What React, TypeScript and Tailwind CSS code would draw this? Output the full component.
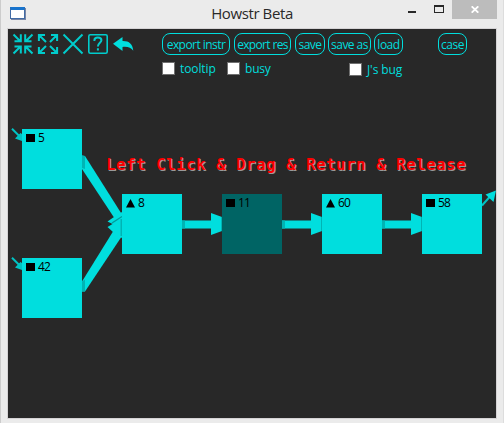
import React from 'react';

const pill =
  'flex h-[22px] shrink-0 items-center justify-center whitespace-nowrap rounded-[8px] border border-[#00dede] pt-[1px] text-[12px] leading-none';

function CheckItem({ label, className }: { label: string; className: string }) {
  return (
    <label className={`flex items-center whitespace-nowrap text-[12px] leading-[13px] ${className}`}>
      <span className="mr-[5px] h-[13px] w-[13px] shrink-0 border border-[#707070] bg-white" />
      <span>{label}</span>
    </label>
  );
}

function ToolIcons() {
  return (
    <svg className="shrink-0" width="122" height="22" viewBox="12 33 122 22" fill="none" stroke="#00cccc" strokeWidth="2">
      <path d="M13.5 34.5l7 7M14.5 41.2h6.3v-7M32.5 34.5l-7 7M31.5 41.2h-6.3v-7M13.5 53.5l7-7M14.5 46.4h6.3v7M32.5 53.5l-7-7M31.5 46.4h-6.3v7" />
      <path d="M39 35l7 7M38.9 41v-6.1H45M57 35l-7 7M51 34.9h6.1V41M39 53l7-7M38.9 47v6.1H45M57 53l-7-7M51 53.1h6.1V47" />
      <path d="M63.5 34.5l19 19M82.5 34.5l-19 19" />
      <rect x="88.8" y="34.8" width="18.4" height="18.4" rx="1.5" strokeWidth="1.6" />
      <path d="M94.4 41v-.8c0-3.6 7-3.6 7 0 0 2.5-3.5 2.6-3.5 6.3M97.9 48.3v2.3" />
      <path d="M113 43.7l9.5-6.7v4.1c6.5-.2 10.2 2.9 10.8 9.7-2.2-3.2-5.8-4.4-10.8-3.8v4z" fill="#00dede" stroke="none" />
    </svg>
  );
}

type NodeProps = { label: string; shape: 'square' | 'triangle'; place: string };

function GraphNode({ label, shape, place }: NodeProps) {
  return (
    <div className={`absolute flex h-[60px] w-[60px] items-start pl-[4px] pt-[4px] text-black ${place}`}>
      <svg width="9" height="9" viewBox="0 0 9 9" className="mt-[1px] shrink-0">
        {shape === 'square' ? <path d="M0 0h9v8H0z" /> : <path d="M4.5 0L9 8.5H0z" />}
      </svg>
      <span className="ml-[3px] text-[12px] leading-[10px] tracking-[-0.8px]">{label}</span>
    </div>
  );
}

function Links() {
  return (
    <svg className="absolute left-0 top-0" width="488" height="389" viewBox="8 29 488 389" fill="#00dede">
      <path d="M82 155.5l3 .5 37 58.5-7 4.5L82 169z" />
      <path d="M82 281.5l31-50L122 226v10l-37 55.5h-3z" />
      <path d="M107.5 221.5l5-3.5 9.5-6v26l-9-6-5.5-5 5-3z" />
      <path d="M112 223l10-6.5" stroke="#009a9a" strokeWidth="1.3" />
      <path d="M82 155.5l3 .5v13l-3-1zM82 281.5l3-2v12h-3zM120.5 219h1.5v17h-1.5z" fill="#00b4b4" />
      {[182, 282, 382].map((x) => (
        <g key={x}>
          <path d={`M${x} 220.5h29v-7.5l11 4v14l-11 4v-6.5h-29z`} />
          <path d={`M${x} 220.5h3v8h-3zM${x + 39} 217h1v14h-1z`} fill="#00b4b4" />
        </g>
      ))}
      {[128, 257].map((y) => (
        <g key={y} stroke="#00c4c4" fill="#00c4c4">
          <path d={`M12 ${y + 0.8}l7.5 7.5`} strokeWidth="2" />
          <path d={`M15 ${y + 10.5}l5.5-5.5 1.5 1v7z`} stroke="none" />
        </g>
      ))}
      <path d="M482 205.5l8-9" stroke="#00c4c4" strokeWidth="2" />
      <path d="M496 190.5l-10.5 4 8 7.5z" fill="#00dede" />
    </svg>
  );
}

export default function App() {
  return (
    <div className="flex h-[423px] w-[504px] flex-col overflow-hidden border-l border-r border-l-[#cccccc] border-r-[#dddddd] bg-[#ebebeb] font-['Open_Sans','Noto_Sans',sans-serif]">
      <header className="flex h-7 shrink-0 items-start">
        <div className="flex w-[180px] pl-[9px] pt-[7px]">
          <div className="h-[12px] w-[15px] border border-t-[3px] border-[#416ba5] border-t-[#1874cd] bg-white shadow-[1px_1px_0_#7886a5]" />
        </div>
        <h1 className="w-[142px] whitespace-nowrap text-center text-[15px] leading-[27px] tracking-[-0.4px] text-[#292929]">Howstr Beta</h1>
        <div className="ml-auto flex h-[19px]">
          <span className="mr-[18px] mt-[11px] h-[2px] w-[8px] bg-[#282828]" />
          <span className="mr-[8px] mt-[5px] h-[8px] w-[10px] border border-t-2 border-[#282828]" />
          <span className="mr-[6px] flex h-[19px] w-[45px] items-center justify-center bg-[#bcbcbc]">
            <svg width="8" height="7" viewBox="0 0 8 7" stroke="white" strokeWidth="1.8"><path d="M.7.3l6.6 6.4M7.3.3L.7 6.7" /></svg>
          </span>
        </div>
      </header>
      <main className="relative ml-[6px] h-[391px] w-[490px] shrink-0 border border-[#d5d3d5] bg-[#282828] text-[#00dede]">
        <Links />
        <div className="relative flex pl-[4px] pt-[4px]">
          <ToolIcons />
          <div className="ml-[28px] flex flex-col">
            <div className="flex">
              <button className={`${pill} w-[68px] tracking-[-0.55px]`}>export instr</button>
              <button className={`${pill} ml-[4px] w-[57px] tracking-[-0.65px]`}>export res</button>
              <button className={`${pill} ml-[4px] w-[30px] tracking-[-0.55px]`}>save</button>
              <button className={`${pill} ml-[3px] w-[43px] tracking-[-0.55px]`}>save as</button>
              <button className={`${pill} ml-[3px] w-[29px] tracking-[-0.5px]`}>load</button>
              <button className={`${pill} ml-[35px] w-[29px] tracking-[-0.5px]`}>case</button>
            </div>
            <div className="mt-[7px] flex items-start">
              <CheckItem label="tooltip" className="w-[65px] tracking-[-0.1px]" />
              <CheckItem label="busy" className="w-[122px] tracking-[-0.2px]" />
              <CheckItem label="J's bug" className="pt-[1px] tracking-[-0.1px]" />
            </div>
          </div>
        </div>
        <p className="absolute left-[98px] top-[125px] whitespace-pre font-['DejaVu_Sans_Mono',monospace] text-[16px] font-bold leading-[22px] tracking-[0.37px] text-[#ff0000] [text-shadow:1px_1px_0_#999]">Left Click &amp; Drag &amp; Return &amp; Release</p>
        <GraphNode label="5" shape="square" place="left-[14px] top-[100px] bg-[#00dede]" />
        <GraphNode label="42" shape="square" place="left-[14px] top-[229px] bg-[#00dede]" />
        <GraphNode label="8" shape="triangle" place="left-[114px] top-[165px] bg-[#00dede]" />
        <GraphNode label="11" shape="square" place="left-[214px] top-[165px] bg-[#006464]" />
        <GraphNode label="60" shape="triangle" place="left-[314px] top-[165px] bg-[#00dede]" />
        <GraphNode label="58" shape="square" place="left-[414px] top-[165px] bg-[#00dede]" />
      </main>
    </div>
  );
}
